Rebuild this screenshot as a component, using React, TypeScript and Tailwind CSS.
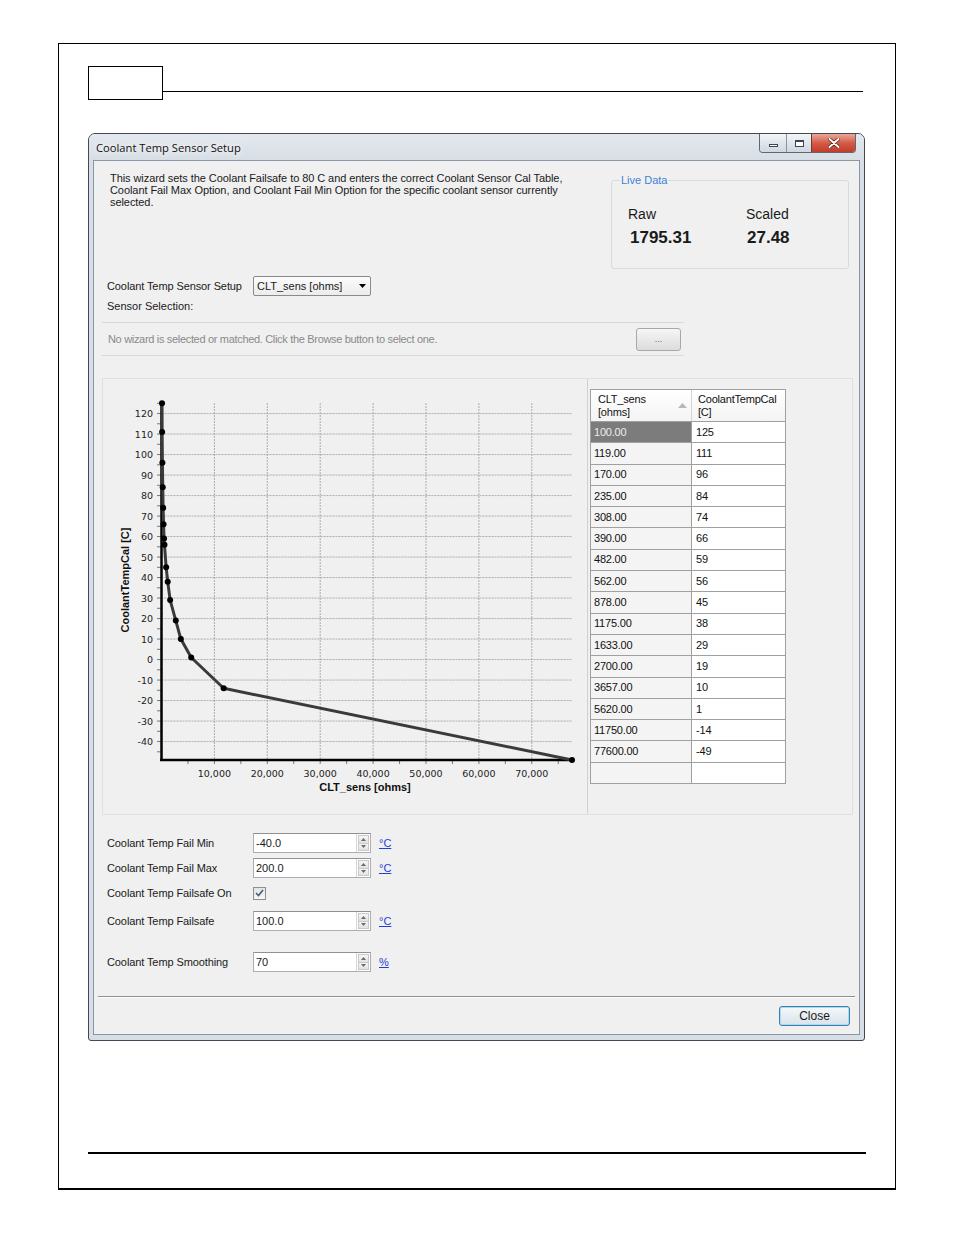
import React from "react";

const data: [number, number][] = [
  [100, 125], [119, 111], [170, 96], [235, 84], [308, 74], [390, 66], [482, 59], [562, 56],
  [878, 45], [1175, 38], [1633, 29], [2700, 19], [3657, 10], [5620, 1], [11750, -14], [77600, -49],
];

const X = (v: number) => 58.5 + (v * 410.5) / 77600;
const Y = (t: number) => 381 - (t + 49) * 2.05;

function Chart() {
  const yTicks = [120, 110, 100, 90, 80, 70, 60, 50, 40, 30, 20, 10, 0, -10, -20, -30, -40];
  const xTicks = [10000, 20000, 30000, 40000, 50000, 60000, 70000];
  const minorX: number[] = [];
  for (let v = 5000; v <= 75000; v += 5000) minorX.push(v);
  const minorY: number[] = [];
  for (let t = -45; t <= 125; t += 5) minorY.push(t);
  const pts = data.map(([v, t]) => `${X(v)},${Y(t)}`).join(" ");
  return (
    <svg width="484" height="435" viewBox="0 0 484 435">
      {xTicks.map((v) => (
        <line key={"gx" + v} x1={X(v)} x2={X(v)} y1={24} y2={381} stroke="#9a9a9a" strokeWidth="0.8" strokeDasharray="2 1" />
      ))}
      {yTicks.map((t) => (
        <line key={"gy" + t} x1={58.5} x2={469} y1={Y(t)} y2={Y(t)} stroke="#9a9a9a" strokeWidth="0.8" strokeDasharray="2 1" />
      ))}
      {minorX.map((v) => (
        <line key={"mx" + v} x1={X(v)} x2={X(v)} y1={381} y2={385} stroke="#777" strokeWidth="1" />
      ))}
      {minorY.map((t) => (
        <line key={"my" + t} x1={54} x2={58.5} y1={Y(t)} y2={Y(t)} stroke="#777" strokeWidth="1" />
      ))}
      {yTicks.map((t) => (
        <text key={"ly" + t} x={50} y={Y(t) + 3.5} textAnchor="end" fontFamily="DejaVu Sans, sans-serif" fontSize="9.5" fill="#222">
          {t}
        </text>
      ))}
      {xTicks.map((v) => (
        <text key={"lx" + v} x={X(v)} y={398} textAnchor="middle" fontFamily="DejaVu Sans, sans-serif" fontSize="9.5" fill="#222">
          {v.toLocaleString("en-US")}
        </text>
      ))}
      <line x1={58.5} x2={58.5} y1={23} y2={382} stroke="#000" strokeWidth="2.5" />
      <line x1={57} x2={470} y1={381} y2={381} stroke="#000" strokeWidth="2.5" />
      <polyline points={pts} fill="none" stroke="#3a3a3a" strokeWidth="3" strokeLinejoin="round" />
      {data.map(([v, t]) => (
        <circle key={"p" + v} cx={X(v)} cy={Y(t)} r="3" fill="#000" />
      ))}
      <text
        x={0}
        y={0}
        transform="translate(26 201) rotate(-90)"
        textAnchor="middle"
        fontFamily="Liberation Sans, sans-serif"
        fontWeight="bold"
        fontSize="11"
        fill="#111"
      >
        CoolantTempCal [C]
      </text>
      <text x={262} y={412} textAnchor="middle" fontFamily="Liberation Sans, sans-serif" fontWeight="bold" fontSize="11" fill="#111">
        CLT_sens [ohms]
      </text>
    </svg>
  );
}

function Table() {
  return (
    <div className="w-[196px] border border-[#a0a0a0] text-[11px] leading-[13px] text-[#111] tracking-[-0.2px]">
      <div className="flex h-[32px] border-b border-[#a0a0a0] bg-gradient-to-b from-white to-[#f4f4f4]">
        <div className="relative w-[101px] border-r border-[#d5d5d5] pl-[7px] pt-[3px]">
          <div>CLT_sens</div>
          <div>[ohms]</div>
          <svg className="absolute right-[4px] top-[13px]" width="9" height="5" viewBox="0 0 9 5">
            <polygon points="0,5 4.5,0 9,5" fill="#b8b8b8" />
          </svg>
        </div>
        <div className="flex-1 pl-[6px] pt-[3px]">
          <div>CoolantTempCal</div>
          <div>[C]</div>
        </div>
      </div>
      {data.map(([v, t], i) => (
        <div key={v} className="flex h-[21.3px] border-b border-[#a0a0a0]">
          <div
            className={
              "w-[101px] border-r border-[#a0a0a0] pl-[3px] flex items-center " +
              (i === 0 ? "bg-[#7c7c7c] text-[#ececec]" : "bg-[#f4f4f4]")
            }
          >
            {v.toFixed(2)}
          </div>
          <div className="flex-1 bg-white pl-[4px] flex items-center">{t}</div>
        </div>
      ))}
      <div className="flex h-[20px]">
        <div className="w-[101px] border-r border-[#a0a0a0] bg-[#f4f4f4]" />
        <div className="flex-1 bg-white" />
      </div>
    </div>
  );
}

function Spin({ value, unit }: { value: string; unit: string }) {
  return (
    <div className="flex items-center">
      <div className="flex h-[20px] w-[118px] border border-[#abadb3] border-t-[#8e9198] bg-white">
        <div className="flex-1 pl-[2px] leading-[18px]">{value}</div>
        <div className="flex w-[14px] flex-col border-l border-[#d6d6d6] p-px">
          <div className="flex flex-1 items-center justify-center border border-[#c9c9c9] bg-gradient-to-b from-[#f6f6f6] to-[#e2e2e2]">
            <svg width="5" height="3" viewBox="0 0 5 3">
              <polygon points="0,3 2.5,0 5,3" fill="#6b6b6b" />
            </svg>
          </div>
          <div className="flex flex-1 items-center justify-center border border-t-0 border-[#c9c9c9] bg-gradient-to-b from-[#f6f6f6] to-[#e2e2e2]">
            <svg width="5" height="3" viewBox="0 0 5 3">
              <polygon points="0,0 2.5,3 5,0" fill="#6b6b6b" />
            </svg>
          </div>
        </div>
      </div>
      <span className="ml-[8px] text-[#1f3fd6] underline">{unit}</span>
    </div>
  );
}

function Row({ label, children, className }: { label: string; children: React.ReactNode; className?: string }) {
  return (
    <div className={"flex h-[20px] items-center " + (className || "")}>
      <div className="w-[159px] whitespace-nowrap pl-[13px] tracking-[-0.1px]">{label}</div>
      {children}
    </div>
  );
}

export default function App() {
  return (
    <div className="h-[1235px] w-[954px] bg-white pl-[58px] pt-[43px] font-['Liberation_Sans',sans-serif] text-[11px] leading-[13px] text-[#1a1a1a]">
      <div className="h-[1147px] w-[838px] border border-b-2 border-black pl-[29px] pt-[22px]">
        <div className="flex items-start">
          <div className="h-[34px] w-[75px] border border-black" />
          <div className="mt-[25px] h-px w-[700px] bg-black" />
        </div>

        <div className="mt-[33px] flex h-[908px] w-[777px] flex-col rounded-t-[7px] rounded-b-[3px] border border-[#3f4a55] bg-[#d8dee5] px-[4px] pb-[5px]">
          <div className="-mx-[4px] flex h-[26px] items-start rounded-t-[6px] bg-gradient-to-b from-[#e4e9ee] to-[#d8dee5] px-[4px]">
            <div className="ml-[3px] font-['Open_Sans',sans-serif] text-[11.2px] leading-[27px] text-[#111] [text-shadow:0_0_6px_#fff,0_0_10px_#fff]">
              Coolant Temp Sensor Setup
            </div>
            <div className="ml-auto mr-[4px] flex h-[19px] overflow-hidden rounded-b-[4px] border border-t-0 border-[#5d6874]">
              <div className="flex w-[27px] items-center justify-center border-r border-[#8a95a2] bg-gradient-to-b from-[#f3f5f8] to-[#d0d7df]">
                <div className="mt-[5px] h-[3px] w-[9px] border border-[#3c4550] bg-white" />
              </div>
              <div className="flex w-[25px] items-center justify-center border-r border-[#6c3a33] bg-gradient-to-b from-[#f3f5f8] to-[#d0d7df]">
                <div className="h-[7px] w-[9px] border border-t-2 border-[#3c4550] bg-white" />
              </div>
              <div className="flex w-[43px] items-center justify-center bg-gradient-to-b from-[#e9a79a] via-[#d35b46] to-[#c23a2b]">
                <svg width="12" height="10" viewBox="0 0 12 10">
                  <path d="M1.5 1 L10.5 9 M10.5 1 L1.5 9" stroke="#5a1d15" strokeWidth="3.4" strokeLinecap="round" />
                  <path d="M1.5 1 L10.5 9 M10.5 1 L1.5 9" stroke="#fff" strokeWidth="2" strokeLinecap="round" />
                </svg>
              </div>
            </div>
          </div>

          <div className="flex flex-1 flex-col border border-[#8a96a3] bg-[#f0f0f0]">
            <div className="flex items-start">
              <div className="ml-[16px] mt-[11px] leading-[12px] tracking-[-0.07px]">
                <div className="whitespace-nowrap">This wizard sets the Coolant Failsafe to 80 C and enters the correct Coolant Sensor Cal Table,</div>
                <div className="whitespace-nowrap">Coolant Fail Max Option, and Coolant Fail Min Option for the specific coolant sensor currently</div>
                <div className="whitespace-nowrap">selected.</div>
              </div>
              <fieldset className="ml-auto mr-[10px] mt-[12px] h-[96px] w-[238px] rounded-[3px] border border-[#d5dbe0] pl-[16px]">
                <legend className="ml-[-8px] px-[1px] text-[11px] leading-[14px] text-[#3c83d8]">Live Data</legend>
                <div className="grid grid-cols-[118px_1fr] pt-[19px]">
                  <div className="text-[14px] leading-[16px]">Raw</div>
                  <div className="text-[14px] leading-[16px]">Scaled</div>
                  <div className="mt-[6px] pl-[2px] text-[17px] font-bold leading-[20px]">1795.31</div>
                  <div className="mt-[6px] pl-[1px] text-[17px] font-bold leading-[20px]">27.48</div>
                </div>
              </fieldset>
            </div>

            <div className="mt-[7px] flex h-[20px] items-center">
              <div className="w-[159px] whitespace-nowrap pl-[13px] tracking-[-0.1px]">Coolant Temp Sensor Setup</div>
              <div className="flex h-[20px] w-[118px] items-center rounded-[2px] border border-[#8a8a8a] bg-gradient-to-b from-[#fbfbfb] to-[#ececec] pl-[3px] pr-[4px]">
                <span className="flex-1">CLT_sens [ohms]</span>
                <svg width="7" height="4" viewBox="0 0 7 4">
                  <polygon points="0,0 7,0 3.5,4" fill="#000" />
                </svg>
              </div>
            </div>
            <div className="mt-[4px] pl-[13px]">Sensor Selection:</div>

            <div className="ml-[8px] mt-[9px] flex h-[34px] w-[582px] items-center border-y border-[#d8d8d8] pl-[6px] pr-[3px]">
              <span className="flex-1 tracking-[-0.32px] text-[#8a8a8a]">No wizard is selected or matched. Click the Browse button to select one.</span>
              <div className="flex h-[23px] w-[45px] items-start justify-center rounded-[3px] border border-[#a8a8a8] bg-gradient-to-b from-[#f6f6f6] to-[#dcdcdc] pt-[6px] text-[9px] leading-[9px] text-[#666]">
                ...
              </div>
            </div>

            <div className="ml-[8px] mt-[22px] flex h-[437px] w-[751px] border border-[#e0e0e0]">
              <div className="w-[485px] border-r border-[#d0d0d0]">
                <Chart />
              </div>
              <div className="flex-1 pl-[2px] pt-[10px]">
                <Table />
              </div>
            </div>

            <Row label="Coolant Temp Fail Min" className="mt-[18px]">
              <Spin value="-40.0" unit="°C" />
            </Row>
            <Row label="Coolant Temp Fail Max" className="mt-[5px]">
              <Spin value="200.0" unit="°C" />
            </Row>
            <Row label="Coolant Temp Failsafe On" className="mt-[5px]">
              <div className="flex h-[13px] w-[13px] items-center justify-center border border-[#8f8f8f] bg-gradient-to-b from-[#e4e4e4] to-[#f6f6f6]">
                <svg width="9" height="8" viewBox="0 0 9 8">
                  <path d="M1 4 L3.5 6.5 L8 1" fill="none" stroke="#4a5a78" strokeWidth="1.6" />
                </svg>
              </div>
            </Row>
            <Row label="Coolant Temp Failsafe" className="mt-[8px]">
              <Spin value="100.0" unit="°C" />
            </Row>
            <Row label="Coolant Temp Smoothing" className="mt-[21px]">
              <Spin value="70" unit="%" />
            </Row>

            <div className="ml-[4px] mt-[24px] h-[2px] w-[757px] border-b border-t border-[#8f8f8f] border-b-white" />

            <div className="mr-[9px] mt-[8px] flex justify-end">
              <div className="flex h-[20px] w-[71px] items-center justify-center rounded-[3px] border border-[#3c7fb1] bg-gradient-to-b from-[#f4f8fb] to-[#d9e3ea] text-[12px] shadow-[inset_0_0_0_1px_#a8dcf5]">
                Close
              </div>
            </div>
          </div>
        </div>

        <div className="mt-[111px] h-[2px] w-[778px] bg-black" />
      </div>
    </div>
  );
}
